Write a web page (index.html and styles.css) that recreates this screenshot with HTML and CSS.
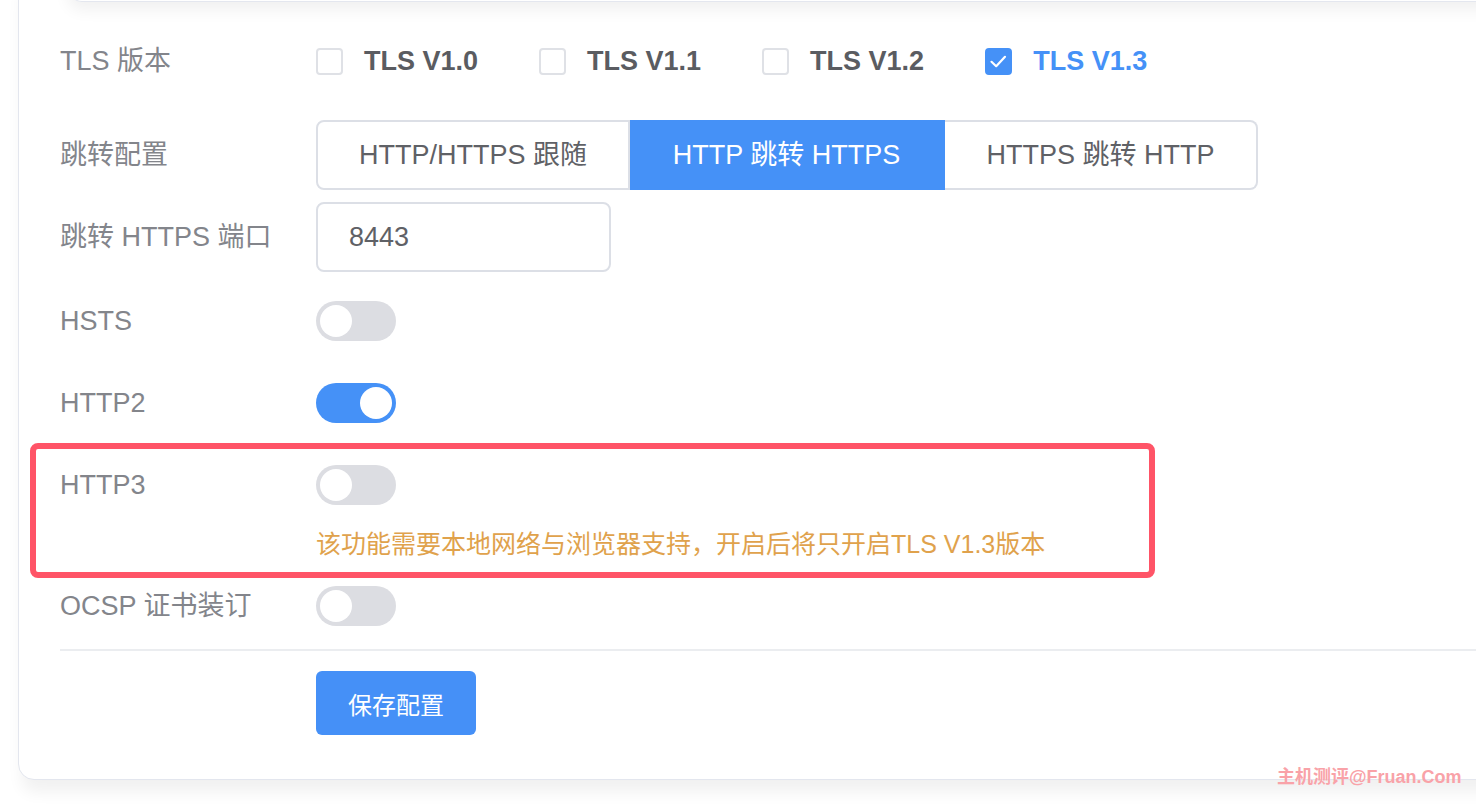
FILE: index.html
```html
<!DOCTYPE html>
<html lang="zh-CN">
<head>
    <meta charset="UTF-8">
    <meta name="viewport" content="width=device-width, initial-scale=1.0">
    <title>SSL 配置</title>
    <link rel="stylesheet" href="styles.css">
</head>
<body>

<div class="page">
    <div class="card">
        <div class="top-panel"></div>

        <div class="form">
            <div class="form-item tls-item">
                <div class="label">TLS 版本</div>
                <div class="checks">
                    <label class="check"><span class="box"></span><span class="check-text">TLS V1.0</span></label>
                    <label class="check"><span class="box"></span><span class="check-text">TLS V1.1</span></label>
                    <label class="check"><span class="box"></span><span class="check-text">TLS V1.2</span></label>
                    <label class="check checked">
                        <span class="box">
                            <svg width="23" height="23" viewBox="0 0 23 23"><polyline points="4.5,11.8 9.2,16.2 18,6.8" fill="none" stroke="#fff" stroke-width="2.2" stroke-linecap="round" stroke-linejoin="round"/></svg>
                        </span>
                        <span class="check-text">TLS V1.3</span>
                    </label>
                </div>
            </div>

            <div class="form-item">
                <div class="label">跳转配置</div>
                <div class="segments">
                    <div class="seg">HTTP/HTTPS 跟随</div>
                    <div class="seg active">HTTP 跳转 HTTPS</div>
                    <div class="seg">HTTPS 跳转 HTTP</div>
                </div>
            </div>

            <div class="form-item port-item">
                <div class="label">跳转 HTTPS 端口</div>
                <div class="input">8443</div>
            </div>

            <div class="form-item">
                <div class="label">HSTS</div>
                <div class="switch"><span class="knob"></span></div>
            </div>

            <div class="form-item">
                <div class="label">HTTP2</div>
                <div class="switch on"><span class="knob"></span></div>
            </div>

            <div class="form-item no-gap">
                <div class="label">HTTP3</div>
                <div class="switch"><span class="knob"></span></div>
            </div>
            <div class="hint">该功能需要本地网络与浏览器支持，开启后将只开启TLS V1.3版本</div>

            <div class="form-item last">
                <div class="label">OCSP 证书装订</div>
                <div class="switch"><span class="knob"></span></div>
            </div>
        </div>

        <div class="divider"></div>

        <div class="actions">
            <button class="save-btn">保存配置</button>
        </div>
    </div>

    <div class="highlight"></div>
    <div class="watermark">主机测评@Fruan.Com</div>
</div>

</body>
</html>
```

FILE: styles.css
```css
* {
    margin: 0;
    padding: 0;
    box-sizing: border-box;
    font-family: "Liberation Sans", "Noto Sans CJK SC", sans-serif;
}
body {
    background: #fff;
    overflow: hidden;
}
.page {
    position: relative;
    height: 804px;
    padding-left: 18px;
    overflow: hidden;
}
.card {
    margin-top: -30px;
    margin-right: -80px;
    background: #fff;
    border: 1px solid #e3e6ee;
    border-radius: 16px;
    padding-bottom: 44px;
    box-shadow: 0 16px 16px -4px rgba(0, 0, 0, 0.06);
}
.top-panel {
    height: 31px;
    margin-left: 49px;
    border: 1px solid #e4e7ef;
    border-top: none;
    border-radius: 0 0 14px 14px;
    box-shadow: 0 8px 16px rgba(0, 0, 0, 0.06);
}
.form {
    margin-top: 24px;
    padding-left: 41px;
}
.form-item {
    display: flex;
    align-items: center;
    min-height: 70px;
    margin-bottom: 12px;
}
.tls-item {
    margin-bottom: 24px;
}
.port-item {
    margin-bottom: 14px;
}
.form-item.no-gap {
    margin-bottom: 0;
}
.form-item.last {
    margin-bottom: 8px;
}
.label {
    width: 256px;
    flex-shrink: 0;
    font-size: 27px;
    line-height: 36px;
    color: #83858b;
    white-space: nowrap;
}
.checks {
    display: flex;
    align-items: center;
}
.check {
    display: flex;
    align-items: center;
    margin-right: 61px;
}
.box {
    width: 27px;
    height: 27px;
    border: 2px solid #dfe1e6;
    border-radius: 4px;
    display: flex;
    align-items: center;
    justify-content: center;
}
.check-text {
    margin-left: 21px;
    font-size: 27px;
    line-height: 36px;
    font-weight: bold;
    color: #5a5c61;
    white-space: nowrap;
}
.check.checked .box {
    background: #4591f7;
    border-color: #4591f7;
}
.check.checked .check-text {
    color: #4591f7;
}
.segments {
    display: flex;
    height: 70px;
}
.seg {
    text-align: center;
    white-space: nowrap;
    font-size: 27px;
    line-height: 66px;
    color: #5f6166;
    border: 2px solid #dcdfe6;
    border-left: none;
}
.seg:first-child {
    width: 314px;
    border-left: 2px solid #dcdfe6;
    border-radius: 8px 0 0 8px;
}
.seg:last-child {
    width: 313px;
    border-radius: 0 8px 8px 0;
}
.seg.active {
    width: 315px;
    background: #4591f7;
    border-color: #4591f7;
    color: #fff;
}
.input {
    width: 295px;
    height: 70px;
    border: 2px solid #dcdfe6;
    border-radius: 8px;
    padding-left: 31px;
    font-size: 27px;
    line-height: 66px;
    color: #5f6166;
}
.switch {
    width: 80px;
    height: 40px;
    border-radius: 20px;
    background: #dcdde2;
    padding: 4px;
    display: flex;
}
.knob {
    width: 32px;
    height: 32px;
    border-radius: 50%;
    background: #fff;
}
.switch.on {
    background: #4591f7;
    justify-content: flex-end;
}
.hint {
    padding: 10px 0 0 256px;
    margin-bottom: 13px;
    font-size: 25px;
    line-height: 28px;
    color: #e0a24c;
    white-space: nowrap;
}
.divider {
    margin-left: 41px;
    height: 2px;
    background: #ebedf0;
}
.actions {
    padding: 20px 0 0 297px;
}
.save-btn {
    width: 160px;
    height: 64px;
    border: none;
    border-radius: 6px;
    background: #4590f7;
    color: #fff;
    font-size: 24px;
}
.highlight {
    position: absolute;
    left: 30px;
    top: 443px;
    width: 1125px;
    height: 135px;
    border: 6px solid #ff5467;
    border-radius: 8px;
}
.watermark {
    position: absolute;
    left: 1277px;
    top: 762px;
    font-size: 18px;
    font-weight: bold;
    color: #f9a2a8;
    white-space: nowrap;
}
```
